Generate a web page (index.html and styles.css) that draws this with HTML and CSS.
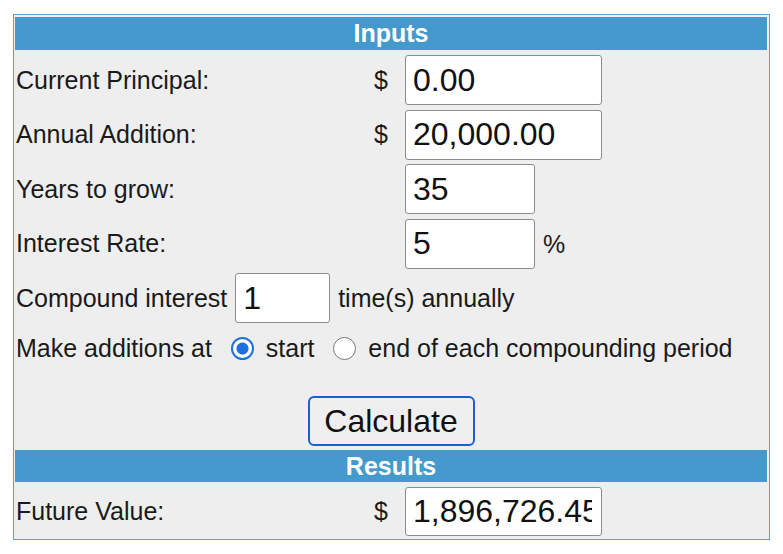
FILE: index.html
```html
<!DOCTYPE html>
<html lang="en">
<head>
<meta charset="utf-8">
<title>Compound Interest Calculator</title>
<link rel="stylesheet" href="styles.css">
</head>
<body>
<form class="panel">
  <div class="band">Inputs</div>
  <div class="grid">
    <label class="label">Current Principal:</label>
    <span class="cur">$</span>
    <div class="cell"><input class="field wide" type="text" value="0.00"></div>

    <label class="label">Annual Addition:</label>
    <span class="cur">$</span>
    <div class="cell"><input class="field wide" type="text" value="20,000.00"></div>

    <label class="label">Years to grow:</label>
    <span class="cur"></span>
    <div class="cell"><input class="field narrow" type="text" value="35"></div>

    <label class="label">Interest Rate:</label>
    <span class="cur"></span>
    <div class="cell"><input class="field narrow" type="text" value="5"><span class="pct">%</span></div>
  </div>
  <div class="line compound">Compound interest <input class="field small" type="text" value="1"> time(s) annually</div>
  <div class="line radios">Make additions at <input class="radio" type="radio" name="when" checked> start <input class="radio" type="radio" name="when"> end of each compounding period</div>
  <div class="actions"><button class="btn" type="button">Calculate</button></div>
  <div class="band band-results">Results</div>
  <div class="grid results">
    <label class="label">Future Value:</label>
    <span class="cur">$</span>
    <div class="cell"><input class="field wide result" type="text" value="1,896,726.45"></div>
  </div>
</form>
</body>
</html>
```
FILE: styles.css
```css
html, body {
  margin: 0;
  padding: 0;
  background: #ffffff;
}

body {
  padding: 14px 0 0 13px;
  font-family: "Liberation Sans", Arial, sans-serif;
  font-size: 25px;
  color: #1a1a1a;
}

.panel {
  box-sizing: border-box;
  width: 757px;
  margin: 0;
  border: 1px solid #5c9fd2;
  padding: 2px 2px 3px 1px;
  background: #eeeeee;
}

.band {
  height: 33px;
  line-height: 33px;
  background: #4499cd;
  color: #ffffff;
  font-weight: bold;
  text-align: center;
}

.band-results {
  height: 32px;
  line-height: 32px;
  margin-top: 4px;
}

.grid {
  display: grid;
  grid-template-columns: 355px 35px 1fr;
  grid-auto-rows: 50px;
  row-gap: 4.5px;
  margin-top: 5px;
  align-items: center;
}

.grid.results {
  grid-auto-rows: 49px;
}

.label {
  padding-left: 1px;
}

.cur {
  padding-left: 4px;
}

.cell {
  display: flex;
  align-items: center;
  height: 100%;
}

.field {
  box-sizing: border-box;
  height: 50px;
  margin: 0;
  border: 1px solid #8c8c8c;
  border-radius: 3px;
  padding: 0 2px 0 7px;
  background: #ffffff;
  font-family: "Liberation Sans", Arial, sans-serif;
  font-size: 32px;
  color: #111111;
  outline: none;
}

.wide { width: 197px; }
.narrow { width: 130px; }
.small { width: 95px; vertical-align: top; }
.result { height: 49px; padding-right: 9px; }

.pct {
  margin-left: 8px;
  padding-top: 2px;
}

.line {
  padding-left: 1px;
  white-space: nowrap;
}

.compound {
  margin-top: 4.5px;
  height: 50px;
  line-height: 50px;
}

.compound .field {
  margin-left: 1px;
  margin-right: 1px;
}

.radios {
  margin-top: 10px;
  height: 30px;
  line-height: 30px;
}

.radio {
  -webkit-appearance: none;
  appearance: none;
  box-sizing: border-box;
  width: 23px;
  height: 23px;
  margin: 0 5px 0 12px;
  border: 1px solid #767676;
  border-radius: 50%;
  background: #ffffff;
  vertical-align: -3px;
}

.radio:checked {
  border: 2px solid #1f6fe0;
  background: radial-gradient(circle, #1f6fe0 0, #1f6fe0 5.5px, #ffffff 6.5px);
}

.actions {
  display: flex;
  justify-content: center;
  margin-top: 33px;
}

.btn {
  box-sizing: border-box;
  width: 167px;
  height: 50px;
  margin: 0;
  padding: 0;
  border: 2px solid #1b5fd6;
  border-radius: 6px;
  background: #efefef;
  font-family: "Liberation Sans", Arial, sans-serif;
  font-size: 32px;
  color: #111111;
}
```
